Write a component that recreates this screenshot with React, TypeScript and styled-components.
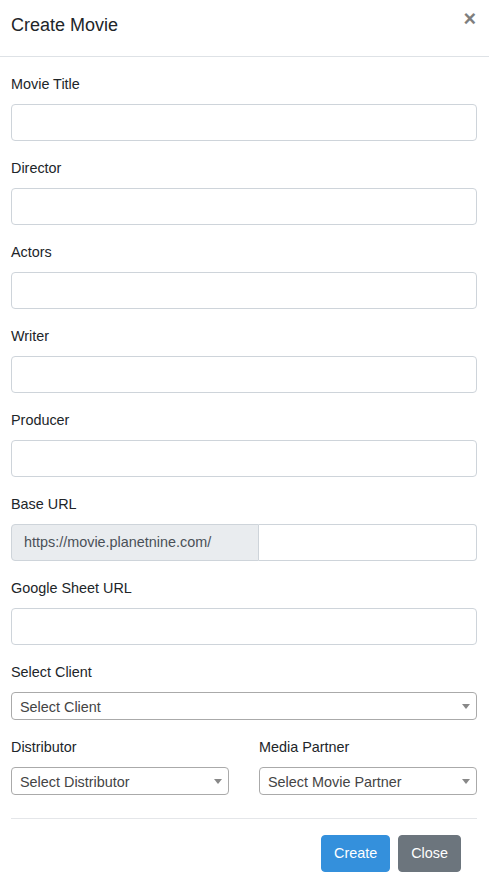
import React from 'react';
import styled, {createGlobalStyle} from 'styled-components';

const GlobalStyle = createGlobalStyle`
  * { box-sizing: border-box; }
  body {
    margin: 0;
    background: #fff;
    font-family: 'Liberation Sans', Arial, sans-serif;
    font-size: 14.4px;
    line-height: 23px;
    color: #212529;
  }
`;

const Modal = styled.div`
  width: 489px;
  min-height: 887px;
  background: #fff;
`;

const Header = styled.div`
  height: 57px;
  display: flex;
  justify-content: space-between;
  align-items: flex-start;
  padding: 11px 11px 0 11px;
  border-bottom: 1px solid #dee2e6;
`;

const Title = styled.h5`
  margin: 0;
  font-size: 18px;
  font-weight: 400;
  line-height: 28px;
  color: #212529;
`;

const CloseX = styled.button`
  border: none;
  background: transparent;
  padding: 0;
  margin: -3px 2px 0 0;
  font-family: 'Liberation Sans', Arial, sans-serif;
  font-size: 21.6px;
  font-weight: 700;
  line-height: 1;
  color: #000;
  opacity: 0.5;
  cursor: pointer;
`;

const Body = styled.div`
  padding: 16px 12px 0 11px;
`;

const FormGroup = styled.div`
  margin-bottom: 16px;
`;

const Label = styled.label`
  display: block;
  margin-bottom: 8px;
  line-height: 23px;
`;

const Input = styled.input`
  display: block;
  width: 100%;
  height: 37px;
  padding: 6px 12px;
  font: inherit;
  color: #495057;
  background: #fff;
  border: 1px solid #ced4da;
  border-radius: 4px;
  outline: none;
`;

const InputGroup = styled.div`
  display: flex;
  height: 37px;
`;

const Addon = styled.div`
  flex: 0 0 248px;
  display: flex;
  align-items: center;
  padding: 0 12px;
  color: #495057;
  background: #e9ecef;
  border: 1px solid #ced4da;
  border-radius: 4px 0 0 4px;
  white-space: nowrap;
`;

const GroupInput = styled(Input)`
  flex: 1;
  height: 37px;
  border-left: none;
  border-radius: 0 4px 4px 0;
`;

const Select = styled.div`
  position: relative;
  height: 28px;
  display: flex;
  align-items: center;
  padding: 2px 20px 0 8px;
  color: #444;
  background: #fff;
  border: 1px solid #aaa;
  border-radius: 4px;
  line-height: 26px;
  white-space: nowrap;
`;

const Arrow = styled.span`
  position: absolute;
  right: 6px;
  top: 11px;
  width: 0;
  height: 0;
  border-left: 4px solid transparent;
  border-right: 4px solid transparent;
  border-top: 5px solid #888;
`;

const Row = styled.div`
  display: grid;
  grid-template-columns: 218px 218px;
  column-gap: 30px;
`;

const Divider = styled.hr`
  margin: 7px 0 0 0;
  border: none;
  border-top: 1px solid #e4e6e9;
`;

const Footer = styled.div`
  display: flex;
  justify-content: flex-end;
  gap: 8px;
  padding: 16px 16px 16px 0;
`;

const Button = styled.button<{ $variant: 'primary' | 'secondary' }>`
  height: 37px;
  padding: 6px 12px;
  font: inherit;
  color: #fff;
  border: 1px solid ${p => (p.$variant === 'primary' ? '#3490dc' : '#6c757d')};
  background: ${p => (p.$variant === 'primary' ? '#3490dc' : '#6c757d')};
  border-radius: 4px;
  cursor: pointer;
`;

const textFields = ['Movie Title', 'Director', 'Actors', 'Writer', 'Producer'];

const SelectBox: React.FC<{ placeholder: string }> = ({placeholder}) => (
    <Select>
        {placeholder}
        <Arrow/>
    </Select>
);

const App: React.FC = () => {
    return (
        <Modal>
            <GlobalStyle/>
            <Header>
                <Title>Create Movie</Title>
                <CloseX aria-label="Close">×</CloseX>
            </Header>
            <Body>
                {textFields.map(f =>
                    <FormGroup key={f}>
                        <Label>{f}</Label>
                        <Input type="text"/>
                    </FormGroup>)}

                <FormGroup>
                    <Label>Base URL</Label>
                    <InputGroup>
                        <Addon>https://movie.planetnine.com/</Addon>
                        <GroupInput type="text"/>
                    </InputGroup>
                </FormGroup>

                <FormGroup>
                    <Label>Google Sheet URL</Label>
                    <Input type="text"/>
                </FormGroup>

                <FormGroup>
                    <Label>Select Client</Label>
                    <SelectBox placeholder="Select Client"/>
                </FormGroup>

                <Row>
                    <FormGroup>
                        <Label>Distributor</Label>
                        <SelectBox placeholder="Select Distributor"/>
                    </FormGroup>
                    <FormGroup>
                        <Label>Media Partner</Label>
                        <SelectBox placeholder="Select Movie Partner"/>
                    </FormGroup>
                </Row>

                <Divider/>
                <Footer>
                    <Button $variant="primary">Create</Button>
                    <Button $variant="secondary">Close</Button>
                </Footer>
            </Body>
        </Modal>
    );
};

export default App;
